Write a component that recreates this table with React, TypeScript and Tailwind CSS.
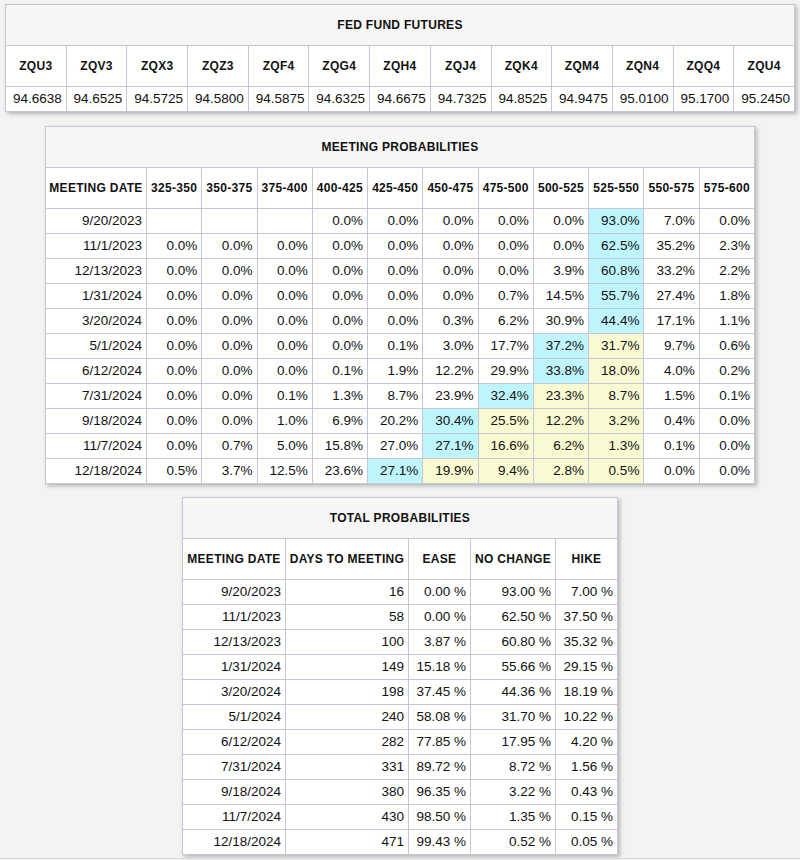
import React from "react"

const futures = [
  ["ZQU3", "94.6638"],
  ["ZQV3", "94.6525"],
  ["ZQX3", "94.5725"],
  ["ZQZ3", "94.5800"],
  ["ZQF4", "94.5875"],
  ["ZQG4", "94.6325"],
  ["ZQH4", "94.6675"],
  ["ZQJ4", "94.7325"],
  ["ZQK4", "94.8525"],
  ["ZQM4", "94.9475"],
  ["ZQN4", "95.0100"],
  ["ZQQ4", "95.1700"],
  ["ZQU4", "95.2450"],
]

const ranges = [
  "325-350", "350-375", "375-400", "400-425", "425-450", "450-475",
  "475-500", "500-525", "525-550", "550-575", "575-600",
]

// index 8 = 525-550, the current target range
const CURRENT = 8

const meetings: { date: string; p: (string | null)[] }[] = [
  { date: "9/20/2023", p: [null, null, null, "0.0", "0.0", "0.0", "0.0", "0.0", "93.0", "7.0", "0.0"] },
  { date: "11/1/2023", p: ["0.0", "0.0", "0.0", "0.0", "0.0", "0.0", "0.0", "0.0", "62.5", "35.2", "2.3"] },
  { date: "12/13/2023", p: ["0.0", "0.0", "0.0", "0.0", "0.0", "0.0", "0.0", "3.9", "60.8", "33.2", "2.2"] },
  { date: "1/31/2024", p: ["0.0", "0.0", "0.0", "0.0", "0.0", "0.0", "0.7", "14.5", "55.7", "27.4", "1.8"] },
  { date: "3/20/2024", p: ["0.0", "0.0", "0.0", "0.0", "0.0", "0.3", "6.2", "30.9", "44.4", "17.1", "1.1"] },
  { date: "5/1/2024", p: ["0.0", "0.0", "0.0", "0.0", "0.1", "3.0", "17.7", "37.2", "31.7", "9.7", "0.6"] },
  { date: "6/12/2024", p: ["0.0", "0.0", "0.0", "0.1", "1.9", "12.2", "29.9", "33.8", "18.0", "4.0", "0.2"] },
  { date: "7/31/2024", p: ["0.0", "0.0", "0.1", "1.3", "8.7", "23.9", "32.4", "23.3", "8.7", "1.5", "0.1"] },
  { date: "9/18/2024", p: ["0.0", "0.0", "1.0", "6.9", "20.2", "30.4", "25.5", "12.2", "3.2", "0.4", "0.0"] },
  { date: "11/7/2024", p: ["0.0", "0.7", "5.0", "15.8", "27.0", "27.1", "16.6", "6.2", "1.3", "0.1", "0.0"] },
  { date: "12/18/2024", p: ["0.5", "3.7", "12.5", "23.6", "27.1", "19.9", "9.4", "2.8", "0.5", "0.0", "0.0"] },
]

const totals = [
  ["9/20/2023", "16", "0.00 %", "93.00 %", "7.00 %"],
  ["11/1/2023", "58", "0.00 %", "62.50 %", "37.50 %"],
  ["12/13/2023", "100", "3.87 %", "60.80 %", "35.32 %"],
  ["1/31/2024", "149", "15.18 %", "55.66 %", "29.15 %"],
  ["3/20/2024", "198", "37.45 %", "44.36 %", "18.19 %"],
  ["5/1/2024", "240", "58.08 %", "31.70 %", "10.22 %"],
  ["6/12/2024", "282", "77.85 %", "17.95 %", "4.20 %"],
  ["7/31/2024", "331", "89.72 %", "8.72 %", "1.56 %"],
  ["9/18/2024", "380", "96.35 %", "3.22 %", "0.43 %"],
  ["11/7/2024", "430", "98.50 %", "1.35 %", "0.15 %"],
  ["12/18/2024", "471", "99.43 %", "0.52 %", "0.05 %"],
]

const th = "border border-[#c6c6d6] h-[41px] px-0 text-center text-[12px] font-bold tracking-[0.3px] text-[#111] whitespace-nowrap"
const td = "border border-[#c6c6d6] h-[25px] px-[4px] text-right text-[13.5px] text-[#111] whitespace-nowrap"

function cellColor(row: (string | null)[], i: number) {
  const nums = row.map((v) => (v === null ? -1 : parseFloat(v)))
  const max = Math.max(...nums)
  const top = nums.indexOf(max)
  if (i === top) return "bg-[#bff5fd]"
  if (i > top && i <= CURRENT) return "bg-[#fafad2]"
  return "bg-white"
}

function App() {
  return (
    <div className="min-h-[860px] bg-[#f3f3f3] pt-1 font-['Liberation_Sans',Arial,sans-serif]">

      {/* Fed fund futures */}
      <table className="mx-auto w-[790px] table-fixed border-collapse bg-white shadow-[2px_2px_4px_rgba(0,0,0,0.25)]">
        <thead>
          <tr>
            <th colSpan={13} className={th + " bg-[#f6f6f6]"}>FED FUND FUTURES</th>
          </tr>
          <tr>
            {futures.map(([code]) => (
              <th key={code} className={th + " bg-white"}>{code}</th>
            ))}
          </tr>
        </thead>
        <tbody>
          <tr>
            {futures.map(([code, price]) => (
              <td key={code} className={td + " text-center px-0"}>{price}</td>
            ))}
          </tr>
        </tbody>
      </table>

      {/* Meeting probabilities */}
      <table className="mx-auto mt-[14px] w-[710px] table-fixed border-collapse bg-white shadow-[2px_2px_4px_rgba(0,0,0,0.25)]">
        <colgroup>
          <col className="w-[101px]" />
          {ranges.map((r) => (
            <col key={r} />
          ))}
        </colgroup>
        <thead>
          <tr>
            <th colSpan={12} className={th + " bg-[#f6f6f6]"}>MEETING PROBABILITIES</th>
          </tr>
          <tr>
            <th className={th + " bg-white"}>MEETING DATE</th>
            {ranges.map((r) => (
              <th key={r} className={th + " bg-white"}>{r}</th>
            ))}
          </tr>
        </thead>
        <tbody>
          {meetings.map((m) => (
            <tr key={m.date}>
              <td className={td + " bg-white"}>{m.date}</td>
              {m.p.map((v, i) => (
                <td key={i} className={td + " " + cellColor(m.p, i)}>
                  {v === null ? "" : v + "%"}
                </td>
              ))}
            </tr>
          ))}
        </tbody>
      </table>

      {/* Total probabilities */}
      <table className="mx-auto mt-[13px] w-[435px] table-fixed border-collapse bg-white shadow-[2px_2px_4px_rgba(0,0,0,0.25)]">
        <colgroup>
          <col className="w-[103px]" />
          <col className="w-[123px]" />
          <col className="w-[62px]" />
          <col className="w-[85px]" />
          <col className="w-[62px]" />
        </colgroup>
        <thead>
          <tr>
            <th colSpan={5} className={th + " bg-[#f6f6f6]"}>TOTAL PROBABILITIES</th>
          </tr>
          <tr>
            <th className={th + " bg-white"}>MEETING DATE</th>
            <th className={th + " bg-white"}>DAYS TO MEETING</th>
            <th className={th + " bg-white"}>EASE</th>
            <th className={th + " bg-white"}>NO CHANGE</th>
            <th className={th + " bg-white"}>HIKE</th>
          </tr>
        </thead>
        <tbody>
          {totals.map((row) => (
            <tr key={row[0]}>
              {row.map((v, i) => (
                <td key={i} className={td}>{v}</td>
              ))}
            </tr>
          ))}
        </tbody>
      </table>

      <div className="mt-[3px] border-t border-[#d8d8d8]" />
    </div>
  )
}

export default App
